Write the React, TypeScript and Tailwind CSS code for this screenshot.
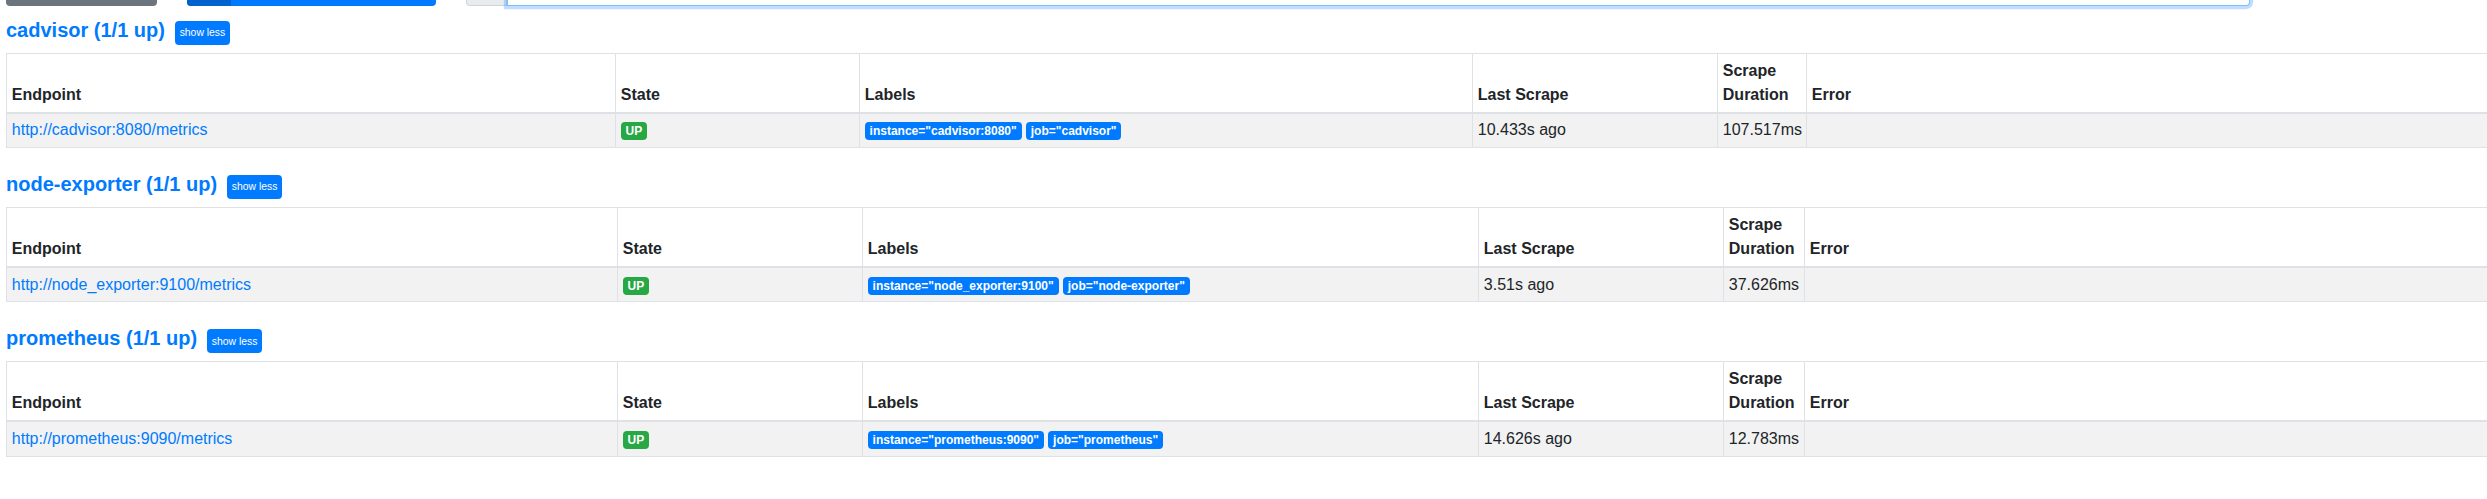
import React from 'react'

interface ScrapePool {
  job: string
  endpoint: string
  labels: string[]
  lastScrape: string
  duration: string
  // column widths of the first five columns, the Error column takes the rest
  widths: string[]
}

const pools: ScrapePool[] = [
  {
    job: 'cadvisor',
    endpoint: 'http://cadvisor:8080/metrics',
    labels: ['instance="cadvisor:8080"', 'job="cadvisor"'],
    lastScrape: '10.433s ago',
    duration: '107.517ms',
    widths: ['w-[609px]', 'w-[244px]', 'w-[613px]', 'w-[245px]', 'w-[89px]'],
  },
  {
    job: 'node-exporter',
    endpoint: 'http://node_exporter:9100/metrics',
    labels: ['instance="node_exporter:9100"', 'job="node-exporter"'],
    lastScrape: '3.51s ago',
    duration: '37.626ms',
    widths: ['w-[611px]', 'w-[245px]', 'w-[616px]', 'w-[245px]', 'w-[81px]'],
  },
  {
    job: 'prometheus',
    endpoint: 'http://prometheus:9090/metrics',
    labels: ['instance="prometheus:9090"', 'job="prometheus"'],
    lastScrape: '14.626s ago',
    duration: '12.783ms',
    widths: ['w-[611px]', 'w-[245px]', 'w-[616px]', 'w-[245px]', 'w-[81px]'],
  },
]

const headers = ['Endpoint', 'State', 'Labels', 'Last Scrape', 'Scrape Duration', 'Error']

function TopBar() {
  return (
    <div className="flex h-[6px] items-start">
      <div className="h-[6px] w-[151px] rounded-b-[4px] bg-[#6c757d]" />
      <div className="ml-[30px] flex h-[6px] w-[249px] overflow-hidden rounded-b-[4px] bg-[#007bff]">
        <div className="h-full w-[44px] bg-[#0062cc]" />
      </div>
      <div className="ml-[30px] flex h-[6px]">
        <div className="h-[6px] w-[41px] rounded-bl-[4px] border border-t-0 border-[#ced4da] bg-[#e9ecef]" />
        <div className="h-[6px] w-[1743px] rounded-br-[4px] border border-t-0 border-[#80bdff] bg-white shadow-[0_0_0_3.2px_rgba(0,123,255,0.25)]" />
      </div>
    </div>
  )
}

function PoolTable({ pool }: { pool: ScrapePool }) {
  return (
    <section className="mb-[24px]">
      <div className="flex items-start">
        <h2 className="text-[20px] leading-[24px] font-bold text-[#007bff]">
          {pool.job} (1/1 up)
        </h2>
        <button className="ml-[10px] mt-[3px] flex h-[24px] w-[55px] items-center justify-center rounded-[4px] bg-[#007bff] text-[10.4px] text-white">
          show less
        </button>
      </div>

      <table className="mt-[8px] w-[2600px] table-fixed border-separate border-spacing-0 border-l border-t border-[#dee2e6] text-left">
        <thead>
          <tr>
            {headers.map((h, i) => (
              <th
                key={h}
                className={`${pool.widths[i] ?? ''} border-r border-b-2 border-[#dee2e6] px-[4.8px] py-[4.8px] align-bottom font-bold leading-[24px]`}
              >
                {h}
              </th>
            ))}
          </tr>
        </thead>
        <tbody>
          <tr className="bg-[#f2f2f2]">
            <td className="border-r border-b border-[#dee2e6] px-[4.8px] py-[4.8px] leading-[24px]">
              <a className="text-[#007bff]">{pool.endpoint}</a>
            </td>
            <td className="border-r border-b border-[#dee2e6] px-[4.8px] py-[4.8px] leading-[24px]">
              <span className="inline-block rounded-[4px] bg-[#28a745] px-[4.8px] py-[3px] text-[12px] leading-none font-bold text-white">
                UP
              </span>
            </td>
            <td className="border-r border-b border-[#dee2e6] px-[4.8px] py-[4.8px] leading-[24px]">
              {pool.labels.map((l, i) => (
                <React.Fragment key={l}>
                  {i > 0 && ' '}
                  <span className="inline-block rounded-[4px] bg-[#007bff] px-[4.8px] py-[3px] text-[12px] leading-none font-bold text-white">
                    {l}
                  </span>
                </React.Fragment>
              ))}
            </td>
            <td className="border-r border-b border-[#dee2e6] px-[4.8px] py-[4.8px] leading-[24px]">
              {pool.lastScrape}
            </td>
            <td className="border-r border-b border-[#dee2e6] px-[4.8px] py-[4.8px] leading-[24px]">
              {pool.duration}
            </td>
            <td className="border-r border-b border-[#dee2e6] px-[4.8px] py-[4.8px] leading-[24px]" />
          </tr>
        </tbody>
      </table>
    </section>
  )
}

export default function App() {
  return (
    <div className="min-h-[499px] w-full overflow-hidden bg-white px-[6px] font-['Liberation_Sans',Arial,sans-serif] text-[16px] text-[#212529]">
      <TopBar />
      <div className="mt-[12px]">
        {pools.map((p) => (
          <PoolTable key={p.job} pool={p} />
        ))}
      </div>
    </div>
  )
}
